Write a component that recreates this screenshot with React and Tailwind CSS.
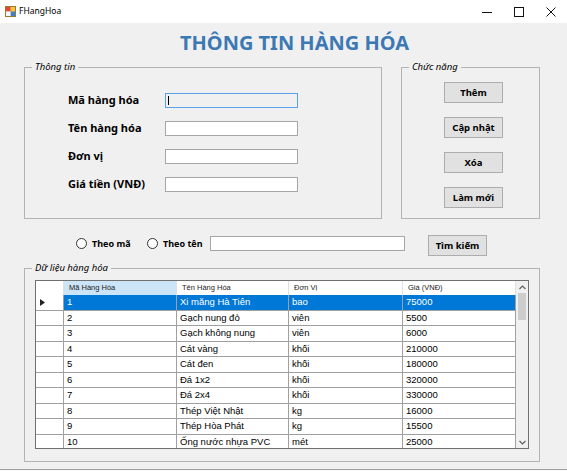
const rows = [
  ['1', 'Xi măng Hà Tiên', 'bao', '75000'],
  ['2', 'Gạch nung đỏ', 'viên', '5500'],
  ['3', 'Gạch không nung', 'viên', '6000'],
  ['4', 'Cát vàng', 'khối', '210000'],
  ['5', 'Cát đen', 'khối', '180000'],
  ['6', 'Đá 1x2', 'khối', '320000'],
  ['7', 'Đá 2x4', 'khối', '330000'],
  ['8', 'Thép Việt Nhật', 'kg', '16000'],
  ['9', 'Thép Hòa Phát', 'kg', '15500'],
  ['10', 'Ống nước nhựa PVC', 'mét', '25000'],
];

const colWidths = ['w-[113px]', 'w-[112px]', 'w-[114px]', 'w-[113px]'];

function TitleBar() {
  return (
    <div className="h-[23px] bg-white flex items-center shrink-0">
      <svg width="11" height="11" viewBox="0 0 11 11" className="ml-[5px]">
        <rect x="0.5" y="0.5" width="10" height="10" fill="#f4c542" stroke="#9a7a2a" strokeWidth="1" />
        <rect x="1" y="1" width="4.5" height="4.5" fill="#e0463a" />
        <rect x="5.5" y="5.5" width="4.5" height="4.5" fill="#3a7fd6" />
        <rect x="1" y="5.5" width="4.5" height="4.5" fill="#f7f7f7" />
      </svg>
      <span className="ml-[3px] text-[8.5px] text-black leading-none">FHangHoa</span>
      <div className="ml-auto flex">
        <div className="w-[32px] h-[23px] flex items-center justify-center">
          <svg width="10" height="10" viewBox="0 0 10 10">
            <line x1="0" y1="5.5" x2="10" y2="5.5" stroke="#111" strokeWidth="1" />
          </svg>
        </div>
        <div className="w-[32px] h-[23px] flex items-center justify-center">
          <svg width="10" height="10" viewBox="0 0 10 10">
            <rect x="0.5" y="0.5" width="9" height="9" fill="none" stroke="#111" strokeWidth="1" />
          </svg>
        </div>
        <div className="w-[32px] h-[23px] flex items-center justify-center">
          <svg width="10" height="10" viewBox="0 0 10 10">
            <path d="M0.5 0.5 L9.5 9.5 M9.5 0.5 L0.5 9.5" stroke="#111" strokeWidth="1" />
          </svg>
        </div>
      </div>
    </div>
  );
}

function Field({ label, focused }) {
  return (
    <div className="h-[28px] flex items-center">
      <span className="w-[97px] text-[11px] font-bold text-black">{label}</span>
      {focused ? (
        <div className="w-[133px] h-[15px] border border-[#5aa2e6] bg-[#f0f0f0] flex items-center pl-[2px]">
          <div className="w-px h-[9px] bg-black" />
        </div>
      ) : (
        <div className="w-[133px] h-[15px] border border-[#a6a6a6] bg-white" />
      )}
    </div>
  );
}

function Btn({ children }) {
  return (
    <button className="w-[59px] h-[21px] bg-[#e1e1e1] border border-[#adadad] text-[9.5px] font-bold text-black leading-none">
      {children}
    </button>
  );
}

function Radio({ label, className }) {
  return (
    <div className={`flex items-center ${className}`}>
      <div className="w-[11px] h-[11px] rounded-full border border-[#333] bg-white" />
      <span className="ml-[5px] text-[9px] font-bold text-black">{label}</span>
    </div>
  );
}

function Grid() {
  return (
    <div className="w-[494px] h-[169px] border border-[#6f6f6f] bg-white flex font-['Liberation_Sans',Arial,sans-serif]">
      <div className="w-[480px] flex flex-col overflow-hidden">
        <div className="h-[14px] flex shrink-0 text-[7.5px] text-[#222]">
          <div className="w-[28px] border-r border-[#e0e0e0]" />
          <div className={`${colWidths[0]} bg-[#cce4f7] border-r border-[#e0e0e0] pl-[5px] flex items-center`}>Mã Hàng Hóa</div>
          <div className={`${colWidths[1]} border-r border-[#e0e0e0] pl-[5px] flex items-center`}>Tên Hàng Hóa</div>
          <div className={`${colWidths[2]} border-r border-[#e0e0e0] pl-[5px] flex items-center`}>Đơn Vị</div>
          <div className={`${colWidths[3]} border-r border-[#e0e0e0] pl-[5px] flex items-center`}>Giá (VNĐ)</div>
        </div>
        {rows.map((r, i) => {
          const sel = i === 0;
          return (
            <div key={i} className="h-[15.5px] flex shrink-0 text-[9.5px]">
              <div className="w-[28px] border-r border-b border-[#a0a0a0] flex items-center pl-[4px]">
                {sel && (
                  <svg width="5" height="7" viewBox="0 0 5 7">
                    <polygon points="0,0 5,3.5 0,7" fill="#222" />
                  </svg>
                )}
              </div>
              {r.map((c, j) => (
                <div
                  key={j}
                  className={`${colWidths[j]} border-r border-b border-[#a0a0a0] px-[3px] flex items-center ${sel ? 'bg-[#0078d7] text-white' : 'text-black'}`}
                >
                  {c}
                </div>
              ))}
            </div>
          );
        })}
      </div>
      <div className="w-[12px] bg-[#f0f0f0] flex flex-col">
        <div className="h-[12px] flex items-center justify-center">
          <svg width="7" height="5" viewBox="0 0 7 5">
            <path d="M0.5 4 L3.5 1 L6.5 4" fill="none" stroke="#606060" strokeWidth="1.2" />
          </svg>
        </div>
        <div className="mx-[2px] h-[27px] bg-[#cdcdcd]" />
        <div className="flex-1" />
        <div className="h-[12px] flex items-center justify-center">
          <svg width="7" height="5" viewBox="0 0 7 5">
            <path d="M0.5 1 L3.5 4 L6.5 1" fill="none" stroke="#606060" strokeWidth="1.2" />
          </svg>
        </div>
      </div>
    </div>
  );
}

export default function App() {
  return (
    <div className="w-[567px] h-[471px] bg-[#f0f0f0] overflow-hidden flex flex-col font-['Noto_Sans',sans-serif]">
      <TitleBar />

      <div className="mt-[8px] h-[24px] pl-[22px] text-center text-[20px] font-bold leading-[24px] text-[#3c79b4]">
        THÔNG TIN HÀNG HÓA
      </div>

      <div className="mt-[5px] flex pl-[24px] gap-[19px]">
        <fieldset className="w-[358px] h-[159px] border border-[#b4b4b4]">
          <legend className="ml-[7px] px-[3px] text-[9.5px] italic leading-[14px] text-black">Thông tin</legend>
          <div className="pt-[12px] pl-[43px] flex flex-col">
            <Field label="Mã hàng hóa" focused />
            <Field label="Tên hàng hóa" />
            <Field label="Đơn vị" />
            <Field label="Giá tiền (VNĐ)" />
          </div>
        </fieldset>

        <fieldset className="w-[139px] h-[159px] border border-[#b4b4b4]">
          <legend className="ml-[7px] px-[3px] text-[9.5px] italic leading-[14px] text-black">Chức năng</legend>
          <div className="pt-[8px] pl-[42px] flex flex-col gap-[14px]">
            <Btn>Thêm</Btn>
            <Btn>Cập nhật</Btn>
            <Btn>Xóa</Btn>
            <Btn>Làm mới</Btn>
          </div>
        </fieldset>
      </div>

      <div className="mt-[14px] h-[21px] flex items-center pl-[76px]">
        <Radio label="Theo mã" className="w-[71px]" />
        <Radio label="Theo tên" className="w-[63px]" />
        <div className="w-[195px] h-[15px] border border-[#a6a6a6] bg-white" />
        <div className="ml-[23px]">
          <Btn>Tìm kiếm</Btn>
        </div>
      </div>

      <fieldset className="mt-[7px] ml-[24px] w-[516px] h-[201px] border border-[#b4b4b4] shrink-0">
        <legend className="ml-[7px] px-[3px] text-[9.5px] italic leading-[14px] text-black">Dữ liệu hàng hóa</legend>
        <div className="pt-[5px] pl-[10px]">
          <Grid />
        </div>
      </fieldset>

      <div className="mt-[7px] border-t border-[#a0a0a0] flex-1 bg-[#f7f7f7]" />
    </div>
  );
}
